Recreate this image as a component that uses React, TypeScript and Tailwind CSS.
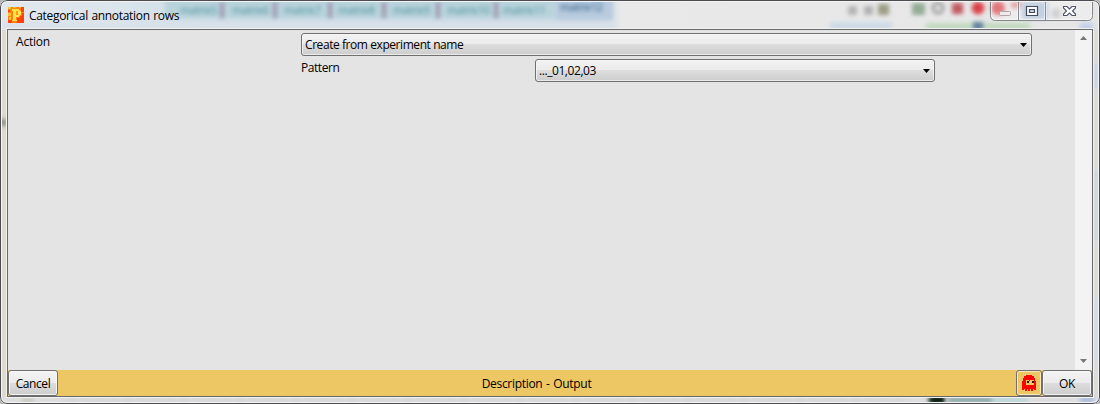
import React from "react";

const tabs = [
  { x: 180, label: "matrix5" },
  { x: 232, label: "matrix6" },
  { x: 284, label: "matrix7" },
  { x: 338, label: "matrix8" },
  { x: 393, label: "matrix9" },
  { x: 447, label: "matrix10" },
  { x: 503, label: "matrix11" },
];
const separators = [221, 274, 329, 383, 437, 495];

function GlassBackdrop() {
  return (
    <svg className="absolute inset-0" width="1100" height="404" viewBox="0 0 1100 404" aria-hidden="true">
      <defs>
        <linearGradient id="topGlass" x1="0" x2="1" y1="0" y2="0">
          <stop offset="0" stopColor="#e2e7ec" />
          <stop offset="0.1" stopColor="#dbe5ec" />
          <stop offset="0.18" stopColor="#cfdfe7" />
          <stop offset="0.55" stopColor="#cbdbe7" />
          <stop offset="0.565" stopColor="#e9e9e9" />
          <stop offset="1" stopColor="#e6e6e7" />
        </linearGradient>
        <filter id="soft" x="-50%" y="-100%" width="200%" height="300%">
          <feGaussianBlur stdDeviation="2.2" />
        </filter>
        <filter id="light" x="-50%" y="-100%" width="200%" height="300%">
          <feGaussianBlur stdDeviation="2" />
        </filter>
      </defs>
      <rect width="1100" height="404" fill="#dcdad1" />
      <rect width="1100" height="30" fill="url(#topGlass)" />
      <g filter="url(#soft)">
        <rect x="165" y="-4" width="390" height="22" fill="#b9d3dc" />
        <rect x="556" y="-4" width="57" height="24" fill="#b8cbdf" />
        <rect x="-5" y="22" width="617" height="7" fill="#dae1e9" />
        <rect x="830" y="22" width="62" height="8" fill="#cddbe8" />
        <rect x="926" y="23" width="104" height="8" fill="#c2dac0" />
        <rect x="1080" y="23" width="13" height="8" fill="#c3cdea" />
        <rect x="1092" y="30" width="8" height="374" fill="#dcdcdc" />
        <rect x="1093" y="64" width="8" height="24" fill="#c9d7e5" />
        <rect x="1093" y="170" width="8" height="70" fill="#d1d7dc" />
        <rect x="1093" y="300" width="8" height="60" fill="#d5dce7" />
      </g>
      <g filter="url(#light)">
        {separators.map((x) => (
          <rect key={x} x={x - 1} y="2" width="4" height="16" fill="#9f96ae" />
        ))}
        {tabs.map((t) => (
          <text key={t.x} x={t.x} y="14" fill="#4a8f9a" className="font-['Open_Sans',sans-serif] text-[11px]">
            {t.label}
          </text>
        ))}
        <text x="560" y="11" fill="#20507c" className="font-['Open_Sans',sans-serif] text-[11px]">matrix12</text>
        <rect x="848" y="6" width="9" height="9" fill="#b4b4b4" />
        <rect x="864" y="6" width="9" height="9" fill="#b0b0b0" />
        <rect x="878" y="4" width="11" height="11" fill="#9b9d84" />
        <rect x="912" y="3" width="13" height="12" fill="#94ac96" />
        <circle cx="938" cy="8" r="5" fill="none" stroke="#969696" strokeWidth="3" />
        <rect x="952" y="3" width="11" height="11" fill="#c15a5e" />
        <circle cx="978" cy="8" r="6.5" fill="#db4348" />
        <circle cx="998" cy="8" r="7" fill="#d94a4f" />
        <rect x="1011" y="2" width="10" height="6" fill="#d98285" />
        <rect x="1022" y="2" width="26" height="17" fill="#adc0d9" />
        <rect x="1052" y="9" width="8" height="9" fill="#bebebe" />
        <rect x="973" y="22" width="10" height="8" fill="#647f9e" />
        <rect x="1" y="119" width="5" height="7" fill="#7d7b76" />
      </g>
      <rect x="0" y="397" width="1100" height="7" fill="#dedede" />
      <g filter="url(#light)">
        <rect x="22" y="398" width="12" height="5" fill="#c8c9bd" />
        <rect x="60" y="398" width="850" height="4" fill="#d2d2d2" strokeDasharray="9 5" stroke="#e8e8e8" />
        <rect x="929" y="395" width="16" height="10" fill="#0a2414" />
        <rect x="948" y="396" width="44" height="8" fill="#95aeb0" />
        <rect x="992" y="396" width="36" height="8" fill="#bfd7da" />
        <rect x="1080" y="396" width="14" height="8" fill="#b0bee0" />
      </g>
    </svg>
  );
}

function AppIcon() {
  return (
    <svg width="16" height="16" viewBox="0 0 16 16" shapeRendering="crispEdges">
      <rect width="16" height="16" fill="#ff8210" />
      <path d="M0 0h3v2H0zM0 6h3v3H0zM5 0h3v1H5zM11 0h3v1h-3zM1 10h2v3H1z" fill="#ffc22a" />
      <path d="M0 3h2v2H0zM13 0h3v5h-3zM12 9h4v7h-4zM0 13h4v3H0zM9 11h3v5H9zM14 6h2v3h-2z" fill="#ff420c" />
      <path d="M4 2h7v1h1v1h1v4h-1v1h-1v1H8v3h1v1H4v-1h1V4H4zM8 4v4h2V4z" fill="#ffe24c" fillRule="evenodd" />
      <path d="M8 4h2v4H8z" fill="#ff9a18" />
    </svg>
  );
}

function GhostIcon() {
  return (
    <svg width="14" height="16" viewBox="0 0 14 16" shapeRendering="crispEdges">
      <path d="M4 0h6v1h2v2h1v3h1v9h-2v-1h-1v2H9v-2H8v2H6v-2H5v2H3v-2H2v1H0V6h1V3h1V1h2z" fill="#fb0504" />
      <path d="M4 5h3v1h1V5h4v5H4z" fill="#edc764" />
      <path d="M5 6h2v2H5zM10 6h2v2h-2z" fill="#291408" />
    </svg>
  );
}

function Select({ value, size }: { value: string; size: string }) {
  return (
    <button
      className={`flex h-[23px] items-center justify-between rounded-[3px] border border-[#707070] bg-[linear-gradient(#f2f2f2_0%,#ebebeb_50%,#dddddd_50%,#cdcdcd_100%)] pr-[4px] pl-[3px] shadow-[inset_0_0_0_1px_#f8f8f8b0] ${size}`}
    >
      {value}
      <svg width="7" height="4" viewBox="0 0 7 4">
        <path d="M0 0h7L3.5 4z" fill="#000" />
      </svg>
    </button>
  );
}

function CaptionButtons() {
  return (
    <svg className="absolute top-0 right-[5px]" width="104" height="21" viewBox="0 0 104 21">
      <path d="M.5 1v13.5q0 5 5 5h92q5 0 5-5V1" fill="#ffffff40" stroke="#858589" />
      <path d="M28.5 1v18M55.500 1v18" stroke="#8c8c92" />
      <path d="M1.5 2v12.5q0 4 4 4h22V2M29.5 2v16.500h25V2M56.500 2v16.500h41q4 0 4-4V2" fill="none" stroke="#ffffff80" />
      <rect x="9.500" y="10.500" width="11" height="4" rx="1" fill="#efebeb" stroke="#b0a5a9" />
      <path d="M36.500 5.500h11v9h-11zM39.500 8.500v3h5v-3z" fill="#fff" fillRule="evenodd" stroke="#444b62" strokeWidth="1.2" />
      <path
        d="M73.500 5.500h3.500l2.500 2.500L82 5.500h3.500v1.500L82.500 10l3 3v1.500H82L79.500 12 77 14.500h-3.500V13l3-3-3-3z"
        fill="#fff"
        stroke="#50546a"
        strokeWidth="1.1"
      />
    </svg>
  );
}

function ScrollArrow({ down = false }: { down?: boolean }) {
  return (
    <svg width="7" height="4" viewBox="0 0 7 4">
      <path d={down ? "M0 0h7L3.500 4z" : "M0 4h7L3.500 0z"} fill="#777" />
    </svg>
  );
}

const buttonFace =
  "flex h-[26px] items-center justify-center rounded-[3px] border border-[#707070] bg-[linear-gradient(#f3f3f3_0%,#ebebeb_50%,#dddddd_50%,#cdcdcd_100%)] shadow-[inset_0_0_0_1px_#fafafacc]";

export default function App() {
  return (
    <div className="h-[404px] w-[1100px] overflow-hidden bg-[#b9b9b7] font-['Open_Sans','Noto_Sans',sans-serif] text-[12px] leading-4 tracking-[-0.43px] text-black [word-spacing:0.8px]">
      <div className="relative h-full w-full overflow-hidden rounded-[7px]">
        <GlassBackdrop />
        <div className="relative flex h-full flex-col rounded-[7px] border border-[#4b4b50] px-[6px] pb-[6px] shadow-[inset_0_0_0_1px_#f5f5f5]">
          <header className="flex h-[28px] shrink-0 items-center gap-[5px] pl-px">
            <AppIcon />
            <span className="pt-px tracking-[-0.32px]">Categorical annotation rows</span>
            <CaptionButtons />
          </header>
          <div className="flex min-h-0 flex-1 flex-col border border-[#66686b] bg-[#e4e4e4] shadow-[0_0_0_1px_#f2f2ee]">
            <main className="flex min-h-0 flex-1">
              <div className="grid flex-1 grid-cols-[293px_1fr] content-start pt-[3px]">
                <span className="pt-px pl-[8px] tracking-[-0.2px]">Action</span>
                <Select value="Create from experiment name" size="w-[731px]" />
                <span />
                <div className="mt-[3px] grid grid-cols-[234px_1fr]">
                  <span className="pt-px">Pattern</span>
                  <Select value="..._01,02,03" size="w-[400px]" />
                </div>
              </div>
              <div className="flex w-[17px] flex-col items-center justify-between bg-[#f3f3f3] pt-[6px] pb-[7px]">
                <ScrollArrow />
                <ScrollArrow down />
              </div>
            </main>
            <footer className="flex h-[26px] shrink-0 items-center bg-[#edc764]">
              <button className={`${buttonFace} w-[50px] pt-px`}>Cancel</button>
              <span className="flex-1 pt-px pr-px text-center tracking-[-0.3px]">Description - Output</span>
              <button className="flex h-[26px] w-[26px] items-center justify-center rounded-[3px] border border-[#707070] shadow-[inset_0_0_0_1px_#f8e9bf]">
                <GhostIcon />
              </button>
              <button className={`${buttonFace} w-[50px] pt-px`}>OK</button>
            </footer>
          </div>
        </div>
      </div>
    </div>
  );
}
